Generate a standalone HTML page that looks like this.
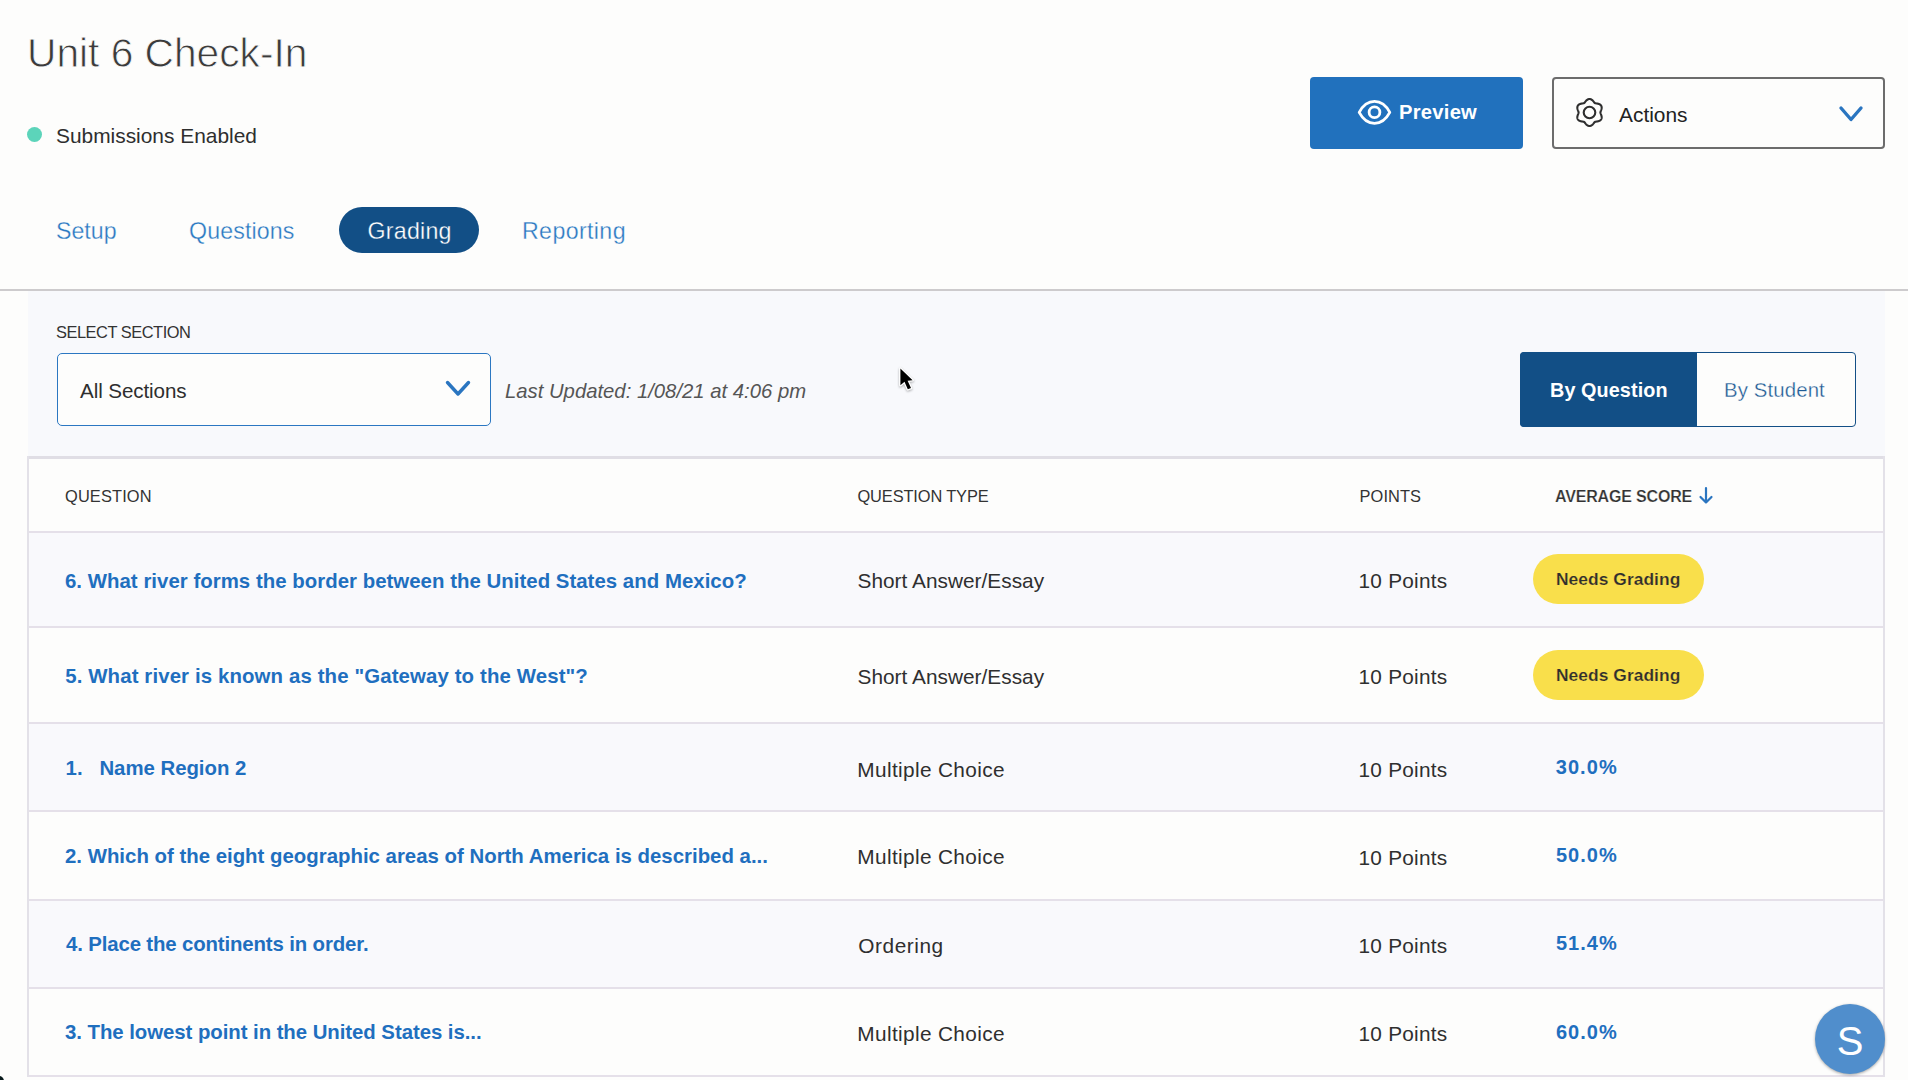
<!DOCTYPE html>
<html><head><meta charset="utf-8">
<style>
html,body{margin:0;padding:0;}
body{width:1908px;height:1080px;position:relative;overflow:hidden;background:#fdfdfc;font-family:"Liberation Sans",sans-serif;color:#333;}
.a{position:absolute;white-space:pre;line-height:1;}
.b{position:absolute;}
.hl{position:absolute;left:28px;width:1857px;background:#e5e0e9;}
</style></head><body>
<div class="b" style="left:27px;top:127px;width:15px;height:15px;border-radius:50%;background:#5cd4ba;"></div>
<div class="b" style="left:1310px;top:77px;width:213px;height:72px;border-radius:4px;background:#2171bd;"></div>
<svg class="b" style="left:1356px;top:98px;" width="37" height="29" viewBox="0 0 37 29">
<path d="M3.2 14.3 C11 -0.37 26 -0.37 33.8 14.3 C26 28.97 11 28.97 3.2 14.3 Z" fill="none" stroke="#fff" stroke-width="2.8" stroke-linejoin="round"/>
<circle cx="18.5" cy="14.2" r="5.4" fill="none" stroke="#fff" stroke-width="2.8"/>
</svg>
<div class="b" style="left:1552px;top:77px;width:333px;height:71.5px;box-sizing:border-box;border:2px solid #6c6c6c;border-radius:4px;background:#fdfdfc;"></div>
<svg class="b" style="left:1573.9px;top:97px;" width="31" height="31" viewBox="0 0 31 31">
<path fill="none" stroke="#2e2e2e" stroke-width="2.1" stroke-linejoin="round" d="M15.50 2.00 L15.85 2.02 L16.20 2.07 L16.55 2.16 L16.89 2.29 L17.22 2.44 L17.54 2.62 L17.85 2.83 L18.14 3.06 L18.43 3.31 L18.69 3.58 L18.95 3.85 L19.19 4.13 L19.43 4.41 L19.65 4.69 L19.87 4.96 L20.08 5.22 L20.29 5.46 L20.50 5.69 L20.72 5.89 L20.95 6.06 L21.21 6.18 L21.50 6.27 L21.80 6.34 L22.11 6.40 L22.44 6.45 L22.79 6.50 L23.14 6.56 L23.50 6.62 L23.86 6.69 L24.23 6.77 L24.59 6.87 L24.95 6.99 L25.30 7.13 L25.63 7.30 L25.95 7.48 L26.25 7.69 L26.53 7.92 L26.78 8.18 L27.00 8.45 L27.19 8.75 L27.35 9.06 L27.48 9.40 L27.58 9.74 L27.64 10.10 L27.67 10.46 L27.67 10.83 L27.64 11.20 L27.59 11.57 L27.52 11.94 L27.42 12.31 L27.31 12.66 L27.19 13.01 L27.07 13.36 L26.94 13.69 L26.81 14.01 L26.69 14.32 L26.58 14.63 L26.50 14.92 L26.43 15.21 L26.40 15.50 L26.43 15.79 L26.50 16.08 L26.58 16.37 L26.69 16.68 L26.81 16.99 L26.94 17.31 L27.07 17.64 L27.19 17.99 L27.31 18.34 L27.42 18.69 L27.52 19.06 L27.59 19.43 L27.64 19.80 L27.67 20.17 L27.67 20.54 L27.64 20.90 L27.58 21.26 L27.48 21.60 L27.35 21.94 L27.19 22.25 L27.00 22.55 L26.78 22.82 L26.53 23.08 L26.25 23.31 L25.95 23.52 L25.63 23.70 L25.30 23.87 L24.95 24.01 L24.59 24.13 L24.23 24.23 L23.86 24.31 L23.50 24.38 L23.14 24.44 L22.79 24.50 L22.44 24.55 L22.11 24.60 L21.80 24.66 L21.50 24.73 L21.21 24.82 L20.95 24.94 L20.72 25.11 L20.50 25.31 L20.29 25.54 L20.08 25.78 L19.87 26.04 L19.65 26.31 L19.43 26.59 L19.19 26.87 L18.95 27.15 L18.69 27.42 L18.43 27.69 L18.14 27.94 L17.85 28.17 L17.54 28.38 L17.22 28.56 L16.89 28.71 L16.55 28.84 L16.20 28.93 L15.85 28.98 L15.50 29.00 L15.15 28.98 L14.80 28.93 L14.45 28.84 L14.11 28.71 L13.78 28.56 L13.46 28.38 L13.15 28.17 L12.86 27.94 L12.57 27.69 L12.31 27.42 L12.05 27.15 L11.81 26.87 L11.57 26.59 L11.35 26.31 L11.13 26.04 L10.92 25.78 L10.71 25.54 L10.50 25.31 L10.28 25.11 L10.05 24.94 L9.79 24.82 L9.50 24.73 L9.20 24.66 L8.89 24.60 L8.56 24.55 L8.21 24.50 L7.86 24.44 L7.50 24.38 L7.14 24.31 L6.77 24.23 L6.41 24.13 L6.05 24.01 L5.70 23.87 L5.37 23.70 L5.05 23.52 L4.75 23.31 L4.47 23.08 L4.22 22.82 L4.00 22.55 L3.81 22.25 L3.65 21.94 L3.52 21.60 L3.42 21.26 L3.36 20.90 L3.33 20.54 L3.33 20.17 L3.36 19.80 L3.41 19.43 L3.48 19.06 L3.58 18.69 L3.69 18.34 L3.81 17.99 L3.93 17.64 L4.06 17.31 L4.19 16.99 L4.31 16.68 L4.42 16.37 L4.50 16.08 L4.57 15.79 L4.60 15.50 L4.57 15.21 L4.50 14.92 L4.42 14.63 L4.31 14.32 L4.19 14.01 L4.06 13.69 L3.93 13.36 L3.81 13.01 L3.69 12.66 L3.58 12.31 L3.48 11.94 L3.41 11.57 L3.36 11.20 L3.33 10.83 L3.33 10.46 L3.36 10.10 L3.42 9.74 L3.52 9.40 L3.65 9.06 L3.81 8.75 L4.00 8.45 L4.22 8.18 L4.47 7.92 L4.75 7.69 L5.05 7.48 L5.37 7.30 L5.70 7.13 L6.05 6.99 L6.41 6.87 L6.77 6.77 L7.14 6.69 L7.50 6.62 L7.86 6.56 L8.21 6.50 L8.56 6.45 L8.89 6.40 L9.20 6.34 L9.50 6.27 L9.79 6.18 L10.05 6.06 L10.28 5.89 L10.50 5.69 L10.71 5.46 L10.92 5.22 L11.13 4.96 L11.35 4.69 L11.57 4.41 L11.81 4.13 L12.05 3.85 L12.31 3.58 L12.57 3.31 L12.86 3.06 L13.15 2.83 L13.46 2.62 L13.78 2.44 L14.11 2.29 L14.45 2.16 L14.80 2.07 L15.15 2.02 Z"/>
<circle cx="15.5" cy="15.5" r="5.8" fill="none" stroke="#2e2e2e" stroke-width="2.1"/>
</svg>
<svg class="b" style="left:1838px;top:105px;" width="26" height="19" viewBox="0 0 26 19">
<path d="M3 3 L13 14.5 L23 3" fill="none" stroke="#2a75c0" stroke-width="3.4" stroke-linecap="round" stroke-linejoin="round"/>
</svg>
<div class="b" style="left:339px;top:207px;width:140px;height:46px;border-radius:23px;background:#124f86;"></div>
<div class="b" style="left:0;top:289px;width:1908px;height:2px;background:#cdcbcd;"></div>
<div class="b" style="left:28px;top:291px;width:1857px;height:165px;background:#f8f9fc;"></div>
<div class="b" style="left:56.5px;top:353px;width:434px;height:72.5px;box-sizing:border-box;border:1.7px solid #2b77c2;border-radius:5px;background:#fdfdfc;"></div>
<svg class="b" style="left:444px;top:379px;" width="28" height="20" viewBox="0 0 28 20">
<path d="M3.5 3.5 L14 15 L24.5 3.5" fill="none" stroke="#2a75c0" stroke-width="3.4" stroke-linecap="round" stroke-linejoin="round"/>
</svg>
<div class="b" style="left:1520px;top:352px;width:336px;height:75px;box-sizing:border-box;border:1.5px solid #134f86;border-radius:4px;background:#fdfdfc;"></div>
<div class="b" style="left:1520px;top:352px;width:177px;height:75px;border-radius:4px 0 0 4px;background:#124f86;"></div>
<div class="b" style="left:28px;top:459px;width:1857px;height:618px;background:#fdfdfc;"></div>
<div class="b" style="left:28px;top:533px;width:1857px;height:94px;background:#f9f9fc;"></div>
<div class="b" style="left:28px;top:724px;width:1857px;height:87px;background:#f9f9fc;"></div>
<div class="b" style="left:28px;top:900px;width:1857px;height:88px;background:#f9f9fc;"></div>
<div class="hl" style="top:456px;height:3px;background:#e0dee5;"></div>
<div class="hl" style="top:531px;height:2px;"></div>
<div class="hl" style="top:626px;height:2px;"></div>
<div class="hl" style="top:722px;height:2px;"></div>
<div class="hl" style="top:810px;height:2px;"></div>
<div class="hl" style="top:899px;height:2px;"></div>
<div class="hl" style="top:987px;height:2px;"></div>
<div class="hl" style="top:1075px;height:2px;"></div>
<div class="b" style="left:27px;top:456px;width:2px;height:621px;background:#e3e1e8;"></div>
<div class="b" style="left:1883px;top:456px;width:2px;height:621px;background:#e3e1e8;"></div>
<svg class="b" style="left:1697px;top:486px;" width="18" height="19" viewBox="0 0 18 19">
<path d="M9 2 L9 16.5 M3.5 11 L9 16.5 L14.5 11" fill="none" stroke="#2a75c0" stroke-width="2.2" stroke-linecap="round" stroke-linejoin="round"/>
</svg>
<div class="b" style="left:1533px;top:554px;width:171px;height:50px;border-radius:25px;background:#f9df4b;"></div>
<div class="b" style="left:1533px;top:650px;width:171px;height:50px;border-radius:25px;background:#f9df4b;"></div>
<div class="a" style="left:27px;top:33px;font-size:40.7px;color:#3b3b3b;-webkit-text-stroke:0.8px #fdfdfc;">Unit 6 Check-In</div>
<div class="a" style="left:56px;top:126px;font-size:20.9px;color:#2e2e2e;">Submissions Enabled</div>
<div class="a" style="left:56px;top:220px;font-size:23.2px;color:#2a78c2;-webkit-text-stroke:0.3px #fdfdfc;">Setup</div>
<div class="a" style="left:189px;top:220px;font-size:23.2px;color:#2a78c2;letter-spacing:0.125px;-webkit-text-stroke:0.3px #fdfdfc;">Questions</div>
<div class="a" style="left:367.5px;top:220px;font-size:23.2px;color:#ffffff;letter-spacing:0.25px;-webkit-text-stroke:0.3px #124f86;">Grading</div>
<div class="a" style="left:522px;top:220px;font-size:23.2px;color:#2a78c2;letter-spacing:0.375px;-webkit-text-stroke:0.3px #fdfdfc;">Reporting</div>
<div class="a" style="left:1399px;top:102px;font-size:20.2px;color:#ffffff;font-weight:700;letter-spacing:0.25px;">Preview</div>
<div class="a" style="left:1619px;top:105px;font-size:20.9px;color:#222222;">Actions</div>
<div class="a" style="left:56px;top:324px;font-size:16.4px;color:#333333;letter-spacing:-0.462px;">SELECT SECTION</div>
<div class="a" style="left:80px;top:381.4px;font-size:20.6px;color:#2e2e2e;letter-spacing:-0.091px;">All Sections</div>
<div class="a" style="left:505px;top:381px;font-size:20.3px;color:#555555;font-style:italic;">Last Updated: 1/08/21 at 4:06 pm</div>
<div class="a" style="left:1550px;top:380.7px;font-size:19.8px;color:#ffffff;font-weight:700;letter-spacing:0.1px;">By Question</div>
<div class="a" style="left:1724px;top:379.7px;font-size:20.4px;color:#1e5b95;letter-spacing:0.111px;-webkit-text-stroke:0.3px #fdfdfc;">By Student</div>
<div class="a" style="left:65px;top:487.8px;font-size:16.4px;color:#333333;letter-spacing:0.143px;">QUESTION</div>
<div class="a" style="left:857.5px;top:487.8px;font-size:16.4px;color:#333333;letter-spacing:-0.125px;">QUESTION TYPE</div>
<div class="a" style="left:1359.5px;top:487.8px;font-size:16.4px;color:#333333;letter-spacing:0.1px;">POINTS</div>
<div class="a" style="left:1555px;top:488.8px;font-size:16px;color:#333333;font-weight:700;letter-spacing:-0.167px;-webkit-text-stroke:0.2px #fdfdfc;">AVERAGE SCORE</div>
<div class="a" style="left:65px;top:571px;font-size:20.4px;color:#1f6fbf;font-weight:700;letter-spacing:0.027px;">6. What river forms the border between the United States and Mexico?</div>
<div class="a" style="left:857.5px;top:571px;font-size:20.8px;color:#2f2f2f;letter-spacing:0.029px;">Short Answer/Essay</div>
<div class="a" style="left:1358.5px;top:570.7px;font-size:20.8px;color:#2f2f2f;letter-spacing:0.25px;">10 Points</div>
<div class="a" style="left:1556px;top:571.4px;font-size:17.4px;color:#2e2e2e;font-weight:700;letter-spacing:0.05px;-webkit-text-stroke:0.2px #f9df4b;">Needs Grading</div>
<div class="a" style="left:65.2px;top:666.3px;font-size:20.4px;color:#1f6fbf;font-weight:700;letter-spacing:0.122px;">5. What river is known as the "Gateway to the West"?</div>
<div class="a" style="left:857.5px;top:666.5px;font-size:20.8px;color:#2f2f2f;letter-spacing:0.029px;">Short Answer/Essay</div>
<div class="a" style="left:1358.5px;top:666.5px;font-size:20.8px;color:#2f2f2f;letter-spacing:0.25px;">10 Points</div>
<div class="a" style="left:1556px;top:667px;font-size:17.4px;color:#2e2e2e;font-weight:700;letter-spacing:0.05px;-webkit-text-stroke:0.2px #f9df4b;">Needs Grading</div>
<div class="a" style="left:65.6px;top:757.8px;font-size:20.4px;color:#1f6fbf;font-weight:700;letter-spacing:-0.035px;">1.   Name Region 2</div>
<div class="a" style="left:857.3px;top:759.6px;font-size:20.8px;color:#2f2f2f;letter-spacing:0.357px;">Multiple Choice</div>
<div class="a" style="left:1358.5px;top:760px;font-size:20.8px;color:#2f2f2f;letter-spacing:0.25px;">10 Points</div>
<div class="a" style="left:1555.7px;top:756.7px;font-size:20px;color:#1f6fbf;font-weight:700;letter-spacing:1.075px;">30.0%</div>
<div class="a" style="left:65px;top:846.3px;font-size:20.4px;color:#1f6fbf;font-weight:700;">2. Which of the eight geographic areas of North America is described a...</div>
<div class="a" style="left:857.3px;top:847.3px;font-size:20.8px;color:#2f2f2f;letter-spacing:0.357px;">Multiple Choice</div>
<div class="a" style="left:1358.5px;top:847.5px;font-size:20.8px;color:#2f2f2f;letter-spacing:0.25px;">10 Points</div>
<div class="a" style="left:1556px;top:845px;font-size:20px;color:#1f6fbf;font-weight:700;letter-spacing:1.0px;">50.0%</div>
<div class="a" style="left:66px;top:934.2px;font-size:20.4px;color:#1f6fbf;font-weight:700;letter-spacing:-0.141px;">4. Place the continents in order.</div>
<div class="a" style="left:858.3px;top:935.8px;font-size:20.8px;color:#2f2f2f;letter-spacing:0.557px;">Ordering</div>
<div class="a" style="left:1358.5px;top:935.8px;font-size:20.8px;color:#2f2f2f;letter-spacing:0.25px;">10 Points</div>
<div class="a" style="left:1556px;top:933.4px;font-size:20px;color:#1f6fbf;font-weight:700;letter-spacing:1.0px;">51.4%</div>
<div class="a" style="left:65px;top:1022.4px;font-size:20.4px;color:#1f6fbf;font-weight:700;letter-spacing:-0.058px;">3. The lowest point in the United States is...</div>
<div class="a" style="left:857.3px;top:1024px;font-size:20.8px;color:#2f2f2f;letter-spacing:0.357px;">Multiple Choice</div>
<div class="a" style="left:1358.5px;top:1024px;font-size:20.8px;color:#2f2f2f;letter-spacing:0.25px;">10 Points</div>
<div class="a" style="left:1556px;top:1021.7px;font-size:20px;color:#1f6fbf;font-weight:700;letter-spacing:1.0px;">60.0%</div>
<div class="b" style="left:1815px;top:1004px;width:70px;height:70px;border-radius:50%;background:#508ecc;box-shadow:0 1px 3px rgba(0,0,0,0.35);"></div>
<div class="a" style="left:1815px;top:1021px;width:70px;text-align:center;font-size:40px;color:#fff;">S</div>
<svg class="b" style="left:893px;top:362px;" width="28" height="34" viewBox="893 362 28 34">
<path d="M900.4 368.6 L900.4 385.2 L904.5 381.8 L907.8 389.3 L911 388.1 L907.6 380.7 L912.6 380.2 Z" fill="#000" stroke="#fff" stroke-width="2.6" stroke-linejoin="round" paint-order="stroke" style="filter:drop-shadow(0 1px 1px rgba(0,0,0,0.3))"/>
</svg>
<div class="b" style="left:-6px;top:1076px;width:10px;height:10px;border-radius:50%;background:#0a1a1c;"></div>
</body></html>
